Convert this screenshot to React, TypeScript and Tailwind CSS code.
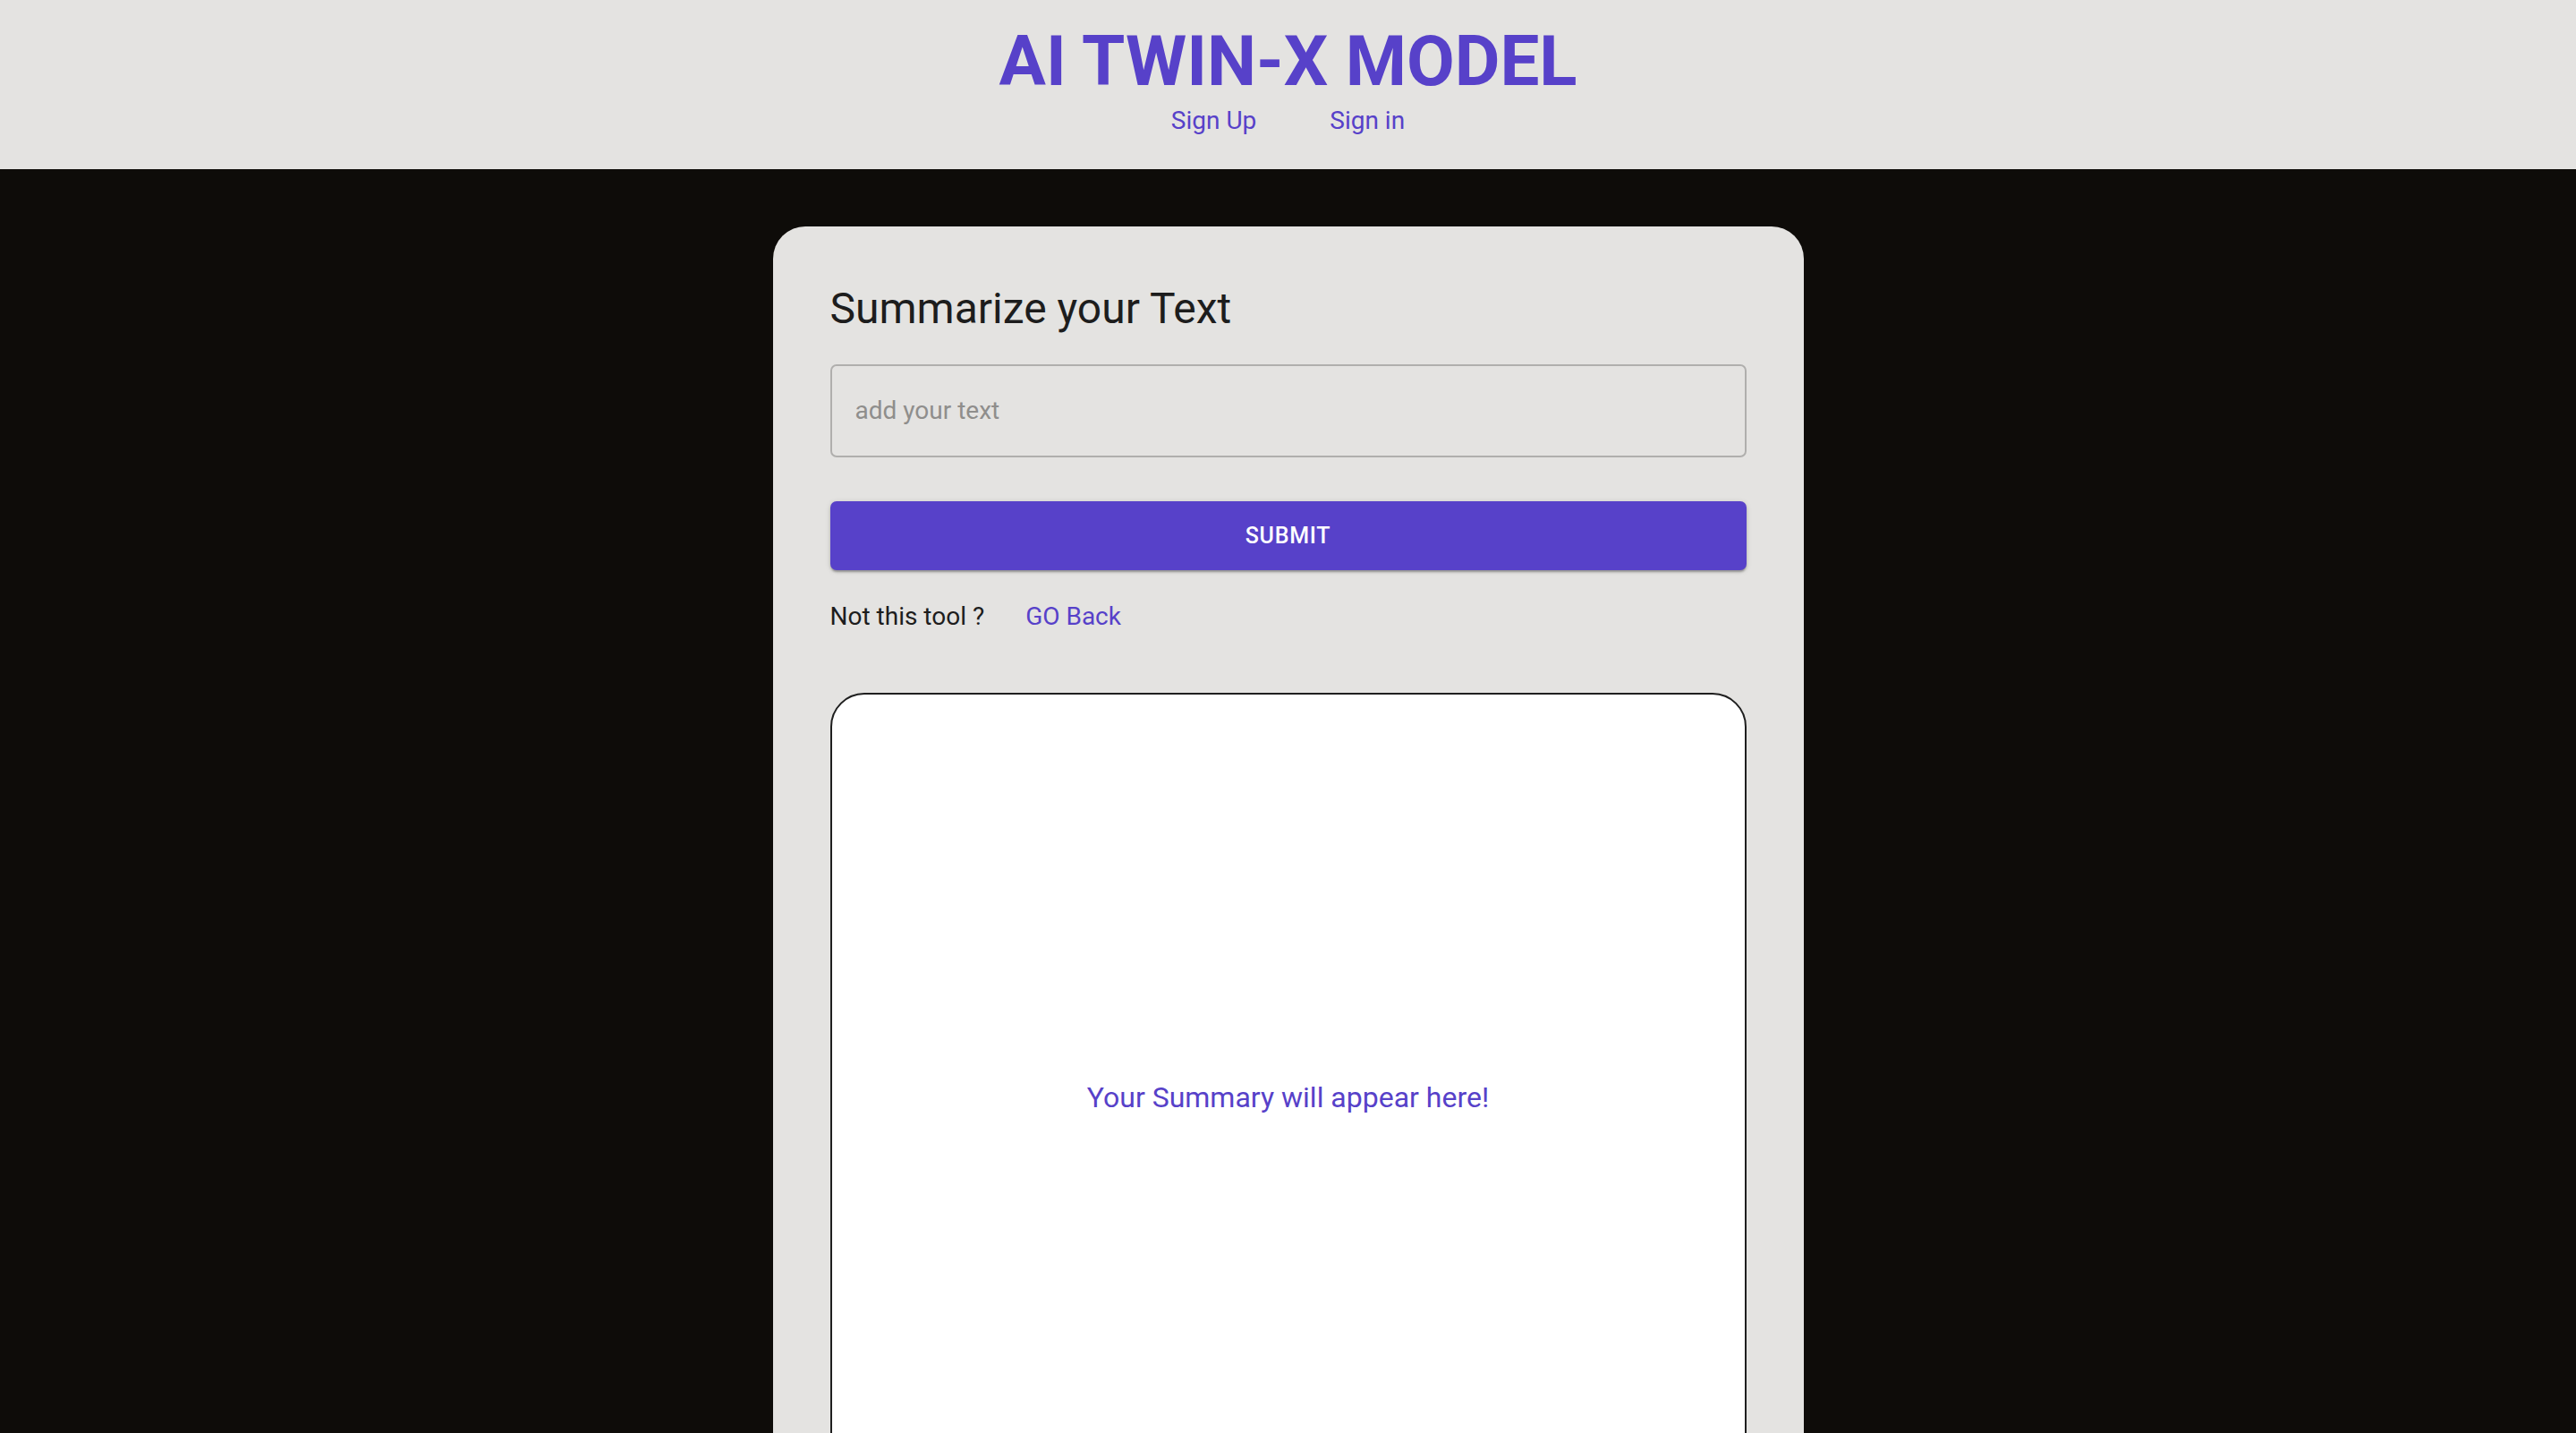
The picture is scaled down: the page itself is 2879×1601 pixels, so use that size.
import { useState } from 'react';

const PURPLE = 'text-[#5741c9]';

export default function App() {
  const [text, setText] = useState('');

  return (
    <div className="h-screen overflow-hidden bg-[#0e0c09] font-['Roboto',sans-serif]">
      {/* Header */}
      <header className="bg-[#e4e3e1] pt-[30px] pb-[40px] flex flex-col items-center">
        <h1 className={`text-[78px] leading-none font-bold ${PURPLE}`}>AI TWIN-X MODEL</h1>
        <nav className="mt-[13px] flex gap-[82px] text-[28px] leading-none">
          <a href="#" className={PURPLE}>Sign Up</a>
          <a href="#" className={PURPLE}>Sign in</a>
        </nav>
      </header>

      {/* Card */}
      <main className="flex justify-center pt-[64px]">
        <section className="w-[1152px] bg-[#e4e3e1] rounded-[36px] px-[64px] pt-[68px] pb-16">
          <h2 className="text-[48px] leading-none font-normal text-[#1d1d1d]">Summarize your Text</h2>

          <input
            value={text}
            onChange={e => setText(e.target.value)}
            placeholder="add your text"
            className="mt-[38px] w-full h-[104px] rounded-[7px] border-2 border-[#b0afad] bg-transparent px-[26px] pb-[2px] text-[28px] text-[#1d1d1d] placeholder:text-[#8f8e8c] outline-none"
          />

          <button className="mt-[49px] w-full h-[77px] rounded-[7px] bg-[#5741c9] text-white text-[25px] font-medium tracking-[0.03em] uppercase shadow-[0_3px_2px_-1px_rgba(0,0,0,0.2),0_2px_3px_0_rgba(0,0,0,0.14),0_1px_6px_0_rgba(0,0,0,0.12)]">
            Submit
          </button>

          <div className="mt-[38px] flex gap-[46px] text-[28px] leading-none">
            <span className="text-[#1d1d1d]">Not this tool ?</span>
            <a href="#" className={PURPLE}>GO Back</a>
          </div>

          {/* Summary output */}
          <div className="mt-[71px] h-[904px] rounded-[38px] border-2 border-[#1f1f1f] bg-white flex items-center justify-center">
            <p className={`text-[32px] ${PURPLE}`}>Your Summary will appear here!</p>
          </div>
        </section>
      </main>
    </div>
  );
}
